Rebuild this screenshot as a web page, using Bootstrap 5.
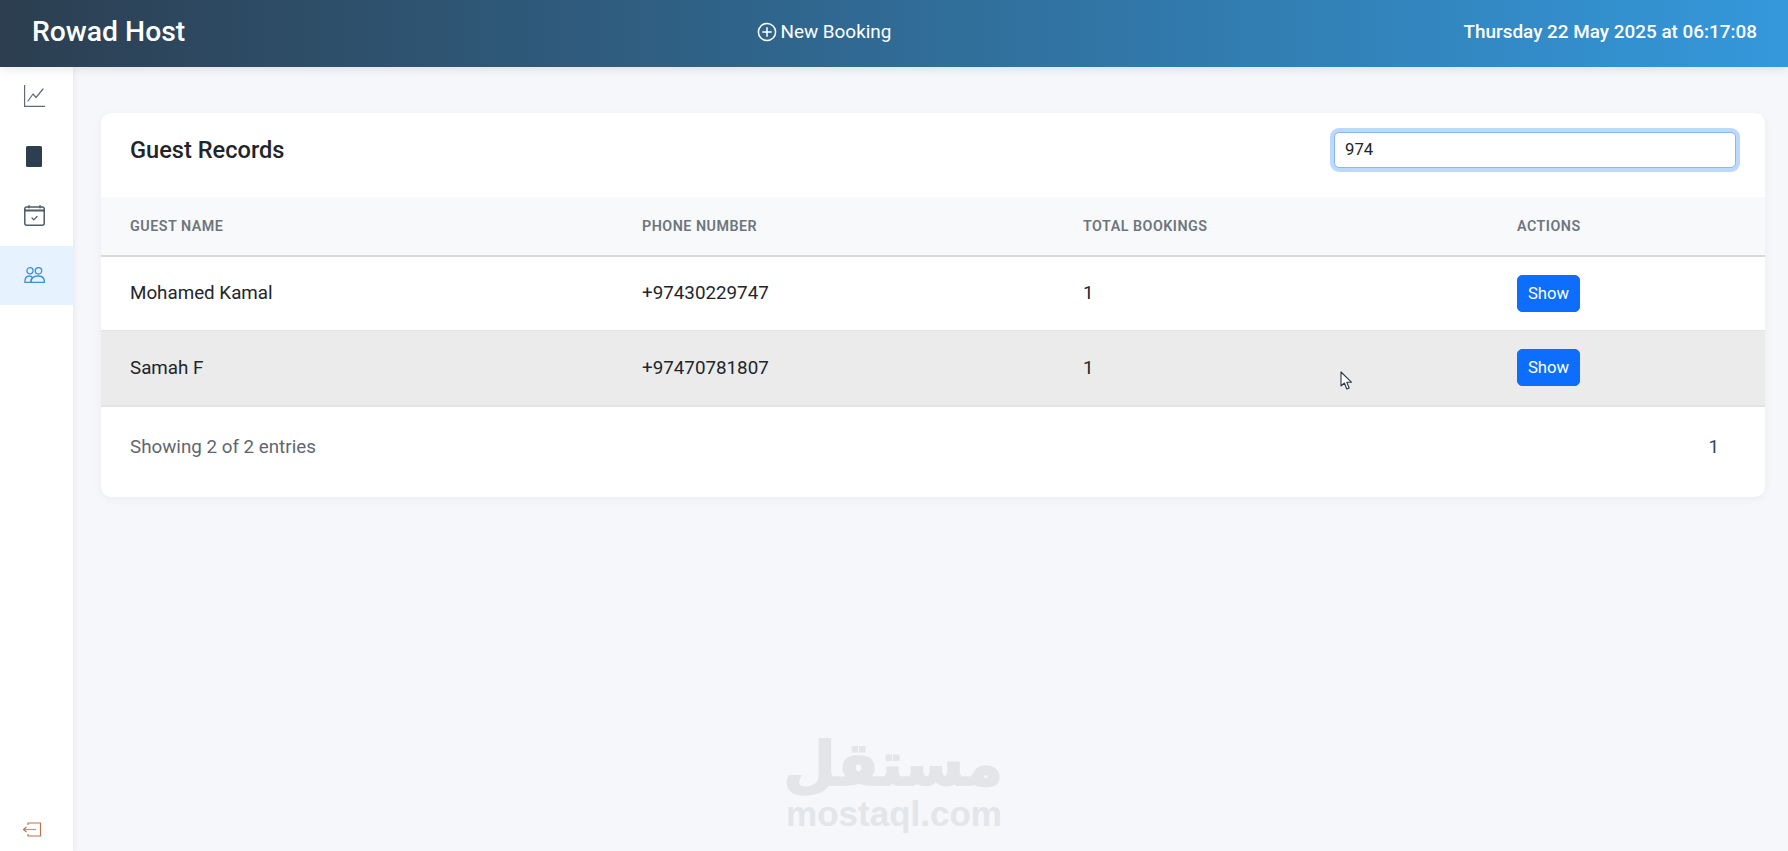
<!doctype html>
<html lang="en">
<head>
<meta charset="utf-8">
<title>Rowad Host</title>
<link rel="stylesheet" href="https://cdn.jsdelivr.net/npm/bootstrap@5.3.0/dist/css/bootstrap.min.css">
<style>
html,body{height:100%}
body{font-family:Roboto,"Liberation Sans",sans-serif;background:#f5f7fb;overflow:hidden}
.app-top{height:66.5px;flex:none;background:linear-gradient(90deg,#2c3e50,#3498db);box-shadow:0 2px 10px rgba(0,0,0,.1);z-index:2;padding:0 31px 2px 32px}
.brand-name{font-size:28.3px;font-weight:500;color:#fff}
.new-link{font-size:18.9px;color:#fff;text-decoration:none;gap:3px}
.new-link svg{width:20px;height:20px}
.top-clock{font-size:18.9px;font-weight:500;color:#fff;white-space:nowrap}
.side-rail{width:73px;background:#fff;box-shadow:2px 0 5px rgba(0,0,0,.05);flex:none}
.rail-item{height:59.7px;color:#2c3e50;padding-right:5px}
.rail-item.is-on{background:#e6f2fd;color:#3b8fdd}
.rail-out{height:46px;padding:0 0 14px 22px}
.main-pane{padding:46.500px 23px 0 28px}
.guest-panel{background:#fff;border-radius:10px;box-shadow:0 2px 10px rgba(0,0,0,.05);height:384px;overflow:hidden}
.panel-head{height:84px;padding:0 29px 11px}
.panel-title{font-size:23.6px;font-weight:500;color:#212529;margin:2px 0 0}
.search-box{width:402px;height:36px;font-size:16.7px;padding:0 10px;border-color:#86b7fe;box-shadow:0 0 0 4px #bcd8fd;border-radius:5px;color:#212529}
.search-box:focus{border-color:#86b7fe;box-shadow:0 0 0 4px #bcd8fd}
.guest-table{margin:0;table-layout:fixed;--bs-table-color:#212529}
.guest-table th{height:59px;background:#f8f9fa;color:#6c757d;font-size:14.3px;font-weight:600;letter-spacing:.5px;text-transform:uppercase;vertical-align:middle;padding:2px 29px 0;border-bottom:2px solid #d9d9d9}
.guest-table td{font-size:18.8px;vertical-align:middle;padding:0 29px;height:74px;border-bottom:1px solid #e3e3e3;color:#212529}
.guest-table tr.row-hover td{height:76px;background:#ebebeb;border-bottom:2px solid #e3e3e3;box-shadow:none}
.show-btn{font-size:16.7px;width:63px;height:37px;padding:0;border-radius:5px;background:#0d6efd;border-color:#0d6efd}
.c1{width:512px}.c2{width:441px}.c3{width:434px}
.panel-foot{padding:26px 29px 0;font-size:18.8px;color:#5f6670}
.page-num{color:#34495e;padding-right:17px}
.mark-overlay{position:absolute;left:785px;top:732px;width:218px;text-align:center;color:#e3e5e8;pointer-events:none}
.mark-ar{font-family:"DejaVu Sans",sans-serif;font-weight:700;font-size:60px;line-height:64px;height:64px;-webkit-text-stroke:2px #e3e5e8}
.mark-en{font-family:"Liberation Sans",sans-serif;font-weight:700;font-size:35px;line-height:36px}
.cursor-mark{position:absolute;left:1340px;top:371px;width:13px;height:20px}
</style>
</head>
<body class="d-flex flex-column position-relative">
<header class="app-top d-flex align-items-center justify-content-between">
  <span class="brand-name">Rowad Host</span>
  <a class="new-link d-flex align-items-center" href="#">
    <svg viewBox="0 0 20 20" fill="none" stroke="#fff" stroke-width="1.5" stroke-linecap="round"><circle cx="10" cy="10" r="8.6"/><path d="M10 5.800v8.400M5.800 10h8.400"/></svg>
    <span>New Booking</span>
  </a>
  <span class="top-clock">Thursday 22 May 2025 at 06:17:08</span>
</header>
<div class="d-flex flex-grow-1" style="min-height:0">
  <nav class="side-rail d-flex flex-column justify-content-between">
    <div>
      <div class="rail-item d-flex align-items-center justify-content-center">
        <svg width="21" height="22" viewBox="0 0 21 22" fill="none" stroke="#5f6b78" stroke-width="1.2"><path d="M.6 0v21.300H21"/><path d="M4 16l5-7 3 3.500L19 4" stroke-linecap="round" stroke-linejoin="round"/></svg>
      </div>
      <div class="rail-item d-flex align-items-center justify-content-center">
        <svg width="16" height="21" viewBox="0 0 16 21"><rect width="16" height="21" rx="1.500" fill="#2c3e50"/></svg>
      </div>
      <div class="rail-item d-flex align-items-center justify-content-center">
        <svg width="21" height="21" viewBox="0 0 21 21" fill="none" stroke="#4f5b68" stroke-width="1.5" stroke-linecap="round" stroke-linejoin="round"><rect x=".8" y="2" width="19.400" height="18.200" rx="2"/><path d="M.8 5.500h19.400" stroke-width="2"/><path d="M5 .8v2M16 .8v2"/><path d="M8 13l1.800 1.800L13 11.500" stroke-width="1.200"/></svg>
      </div>
      <div class="rail-item is-on d-flex align-items-center justify-content-center">
        <svg width="21" height="16" viewBox="0 0 21 16" fill="none" stroke="#3b8fdd" stroke-width="1.300"><circle cx="6" cy="3.800" r="3.100"/><circle cx="14.500" cy="3.800" r="3.200"/><path d="M.8 15.300c0-4 1.500-6.300 4.500-6.300 1.500 0 2.500.5 3 1.500-1 1-1.500 2.800-1.500 4.800H.8z" stroke-linejoin="round"/><path d="M6.800 15.300C7 11.300 9.800 9 14 9s6.500 2.300 6.500 6.300H6.800z" stroke-linejoin="round"/></svg>
      </div>
    </div>
    <div class="rail-out d-flex align-items-end">
      <svg width="20" height="15" viewBox="0 0 20 15" fill="none" stroke="#b8744c" stroke-width="1.200" stroke-linejoin="round"><path d="M6 3V1h12.500v13H6v-2"/><path d="M14 7.500H2" stroke="#a9a09a"/><path d="M4.500 5L1.500 7.500 4.500 10"/></svg>
    </div>
  </nav>
  <main class="main-pane flex-grow-1">
    <section class="guest-panel">
      <div class="panel-head d-flex align-items-center justify-content-between">
        <h1 class="panel-title">Guest Records</h1>
        <input class="form-control search-box" type="text" value="974" aria-label="Search">
      </div>
      <table class="table guest-table">
        <thead>
          <tr><th class="c1">Guest Name</th><th class="c2">Phone Number</th><th class="c3">Total Bookings</th><th>Actions</th></tr>
        </thead>
        <tbody>
          <tr><td>Mohamed Kamal</td><td>+97430229747</td><td>1</td><td><button class="btn btn-primary show-btn">Show</button></td></tr>
          <tr class="row-hover"><td>Samah F</td><td>+97470781807</td><td>1</td><td><button class="btn btn-primary show-btn">Show</button></td></tr>
        </tbody>
      </table>
      <div class="panel-foot d-flex justify-content-between">
        <span>Showing 2 of 2 entries</span>
        <span class="page-num">1</span>
      </div>
    </section>
  </main>
</div>
<div class="mark-overlay">
  <div class="mark-ar" dir="rtl">مستقل</div>
  <div class="mark-en">mostaql.com</div>
</div>
<svg class="cursor-mark" viewBox="0 0 13 20" fill="#fff" stroke="#2c3442" stroke-width="1.100" stroke-linejoin="round"><path d="M1 1v14l3.400-3 2.400 6 2.400-1-2.400-5.800h4.600z"/></svg>
<script src="https://cdn.jsdelivr.net/npm/bootstrap@5.3.0/dist/js/bootstrap.bundle.min.js"></script>
</body>
</html>
